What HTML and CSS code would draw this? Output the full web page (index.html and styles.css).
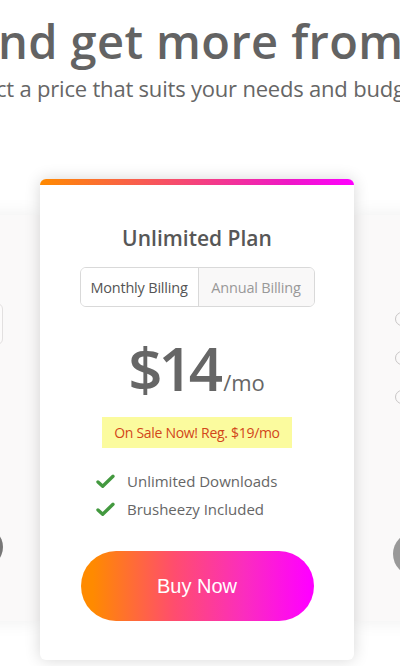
FILE: index.html
```html
<!DOCTYPE html>
<html>
<head>
<meta charset="utf-8">
<link rel="stylesheet" href="styles.css">
</head>
<body>
<header class="intro">
  <h1 class="headline">nd get more from</h1>
  <p class="lead">ct a price that suits your needs and budg</p>
</header>
<section class="plans">
  <div class="plan side side-left">
    <div class="side-toggle"></div>
    <div class="side-btn dark"></div>
  </div>
  <div class="plan main">
    <div class="topbar"></div>
    <div class="main-body">
      <h2 class="plan-title">Unlimited Plan</h2>
      <div class="toggle">
        <div class="tog active">Monthly Billing</div>
        <div class="tog">Annual Billing</div>
      </div>
      <div class="price"><span class="amount">$14</span><span class="per">/mo</span></div>
      <div class="sale">On Sale Now! Reg. $19/mo</div>
      <ul class="features">
        <li><svg class="check" viewBox="0 0 20 16" width="19" height="15"><path d="M2 8.5 L7 13 L18 2.5" fill="none" stroke="#43993f" stroke-width="3.6" stroke-linecap="round" stroke-linejoin="round"/></svg>Unlimited Downloads</li>
        <li><svg class="check" viewBox="0 0 20 16" width="19" height="15"><path d="M2 8.5 L7 13 L18 2.5" fill="none" stroke="#43993f" stroke-width="3.6" stroke-linecap="round" stroke-linejoin="round"/></svg>Brusheezy Included</li>
      </ul>
      <div class="buy">Buy Now</div>
    </div>
  </div>
  <div class="plan side side-right">
    <div class="radios">
      <span class="radio"></span>
      <span class="radio"></span>
      <span class="radio"></span>
    </div>
    <div class="side-btn grey"></div>
  </div>
</section>
</body>
</html>
```
FILE: styles.css
```css
html, body {
  margin: 0;
  padding: 0;
  background: #ffffff;
  overflow: hidden;
  width: 400px;
  height: 666px;
}
body {
  font-family: "Open Sans", "Noto Sans", sans-serif;
  color: #666;
}
.intro {
  white-space: nowrap;
  overflow: hidden;
}
.headline {
  margin: 13px 0 0 -2px;
  font-size: 47px;
  line-height: 56px;
  font-weight: 600;
  color: #636363;
  letter-spacing: 0.4px;
}
.lead {
  margin: 4px 0 0 -4px;
  font-size: 22px;
  line-height: 30px;
  color: #666;
  letter-spacing: -0.2px;
}
.plans {
  display: flex;
  align-items: flex-start;
  margin-top: 76px;
}
.plan {
  box-sizing: border-box;
  flex: none;
}
.side {
  width: 300px;
  height: 406px;
  margin-top: 36px;
  background: #faf9f9;
  box-shadow: 0 0 18px rgba(0,0,0,0.07);
  display: flex;
  flex-direction: column;
}
.side-left {
  margin-left: -260px;
  align-items: flex-end;
  padding-right: 37px;
}
.side-right {
  align-items: flex-start;
  padding-left: 39px;
}
.side-toggle {
  margin-top: 88px;
  width: 200px;
  height: 40px;
  border: 1px solid #e2e0e0;
  border-radius: 6px;
  background: #fcfbfb;
}
.side-btn {
  width: 200px;
  border-radius: 21px;
}
.side-btn.dark {
  margin-top: 182px;
  height: 40px;
  background: #777;
}
.side-btn.grey {
  margin-top: 128px;
  height: 44px;
  border-radius: 22px;
  background: #999;
}
.radios {
  margin-top: 97px;
  display: flex;
  flex-direction: column;
  gap: 25px;
}
.radio {
  display: block;
  width: 12px;
  height: 12px;
  border: 1.5px solid #c8c6c6;
  border-radius: 50%;
  margin-left: 2px;
}
.main {
  width: 314px;
  position: relative;
  z-index: 2;
  background: #fff;
  border-radius: 6px;
  overflow: hidden;
  box-shadow: 0 0 16px rgba(0,0,0,0.16);
}
.topbar {
  height: 6px;
  background: linear-gradient(90deg, #ff8a00, #ee17c8 80%, #f0f);
}
.main-body {
  display: flex;
  flex-direction: column;
  align-items: center;
  padding: 39px 0 39px;
}
.plan-title {
  margin: 0;
  font-size: 21px;
  line-height: 28px;
  font-weight: 600;
  color: #575757;
}
.toggle {
  margin-top: 15px;
  display: flex;
  width: 235px;
  height: 40px;
  box-sizing: border-box;
  border: 1px solid #d9d9d9;
  border-radius: 6px;
  overflow: hidden;
}
.tog {
  flex: 1;
  display: flex;
  align-items: center;
  justify-content: center;
  font-size: 14.5px;
  color: #999;
  background: #f9f8f8;
  letter-spacing: -0.2px;
}
.tog.active {
  flex: 0 0 117px;
  background: #fff;
  color: #555;
  border-right: 1px solid #d9d9d9;
}
.price {
  margin-top: 26px;
  height: 70px;
  line-height: 70px;
  display: flex;
  align-items: baseline;
  color: #666;
  margin-left: -1px;
}
.amount {
  font-size: 60px;
  font-weight: 600;
  letter-spacing: -4px;
}
.per {
  font-size: 22px;
  margin-left: 4px;
}
.sale {
  margin-top: 14px;
  width: 190px;
  height: 31px;
  line-height: 31px;
  text-align: center;
  background: #fbfb9e;
  color: #d2461a;
  font-size: 14px;
  letter-spacing: -0.3px;
}
.features {
  align-self: flex-start;
  margin: 19px 0 0 56px;
  padding: 0;
  list-style: none;
}
.features li {
  display: flex;
  align-items: center;
  height: 28px;
  font-size: 15px;
  color: #666;
}
.check {
  margin-right: 12px;
}
.buy {
  margin-top: 28px;
  width: 233px;
  height: 70px;
  border-radius: 35px;
  background: linear-gradient(90deg, #ff8a00 5%, #ff4d6e 40%, #fb2dbe 70%, #ff00ff 98%);
  color: #fff;
  font-family: "Liberation Sans", Arial, sans-serif;
  font-size: 20px;
  display: flex;
  align-items: center;
  justify-content: center;
}
```
